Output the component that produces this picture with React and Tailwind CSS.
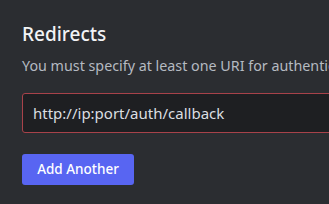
export default function App() {
  return (
    <div className="w-[329px] h-[204px] overflow-hidden bg-[#2b2d31]" style={{ fontFamily: '"Noto Sans", sans-serif' }}>
      <div className="w-[420px] pl-[22px] pt-[22px]">
        <h2 className="text-[19px] leading-[24px] font-medium text-[#f2f3f5]">Redirects</h2>
        <p className="mt-[10px] text-[14.3px] leading-[20px] text-[#b5bac1] whitespace-nowrap">
          You must specify at least one URI for authentication to work.
        </p>
        <div className="mt-[17px] h-[40px] w-[390px] rounded-[3px] border border-[#a8424a] bg-[#1e1f22] flex items-center px-[10px]">
          <span className="text-[15px] text-[#dbdee1]">http://ip:port/auth/callback</span>
        </div>
        <button className="mt-[21px] h-[31px] w-[112px] rounded-[3px] bg-[#5865f2] text-[13.5px] font-medium text-white">
          Add Another
        </button>
      </div>
    </div>
  );
}
